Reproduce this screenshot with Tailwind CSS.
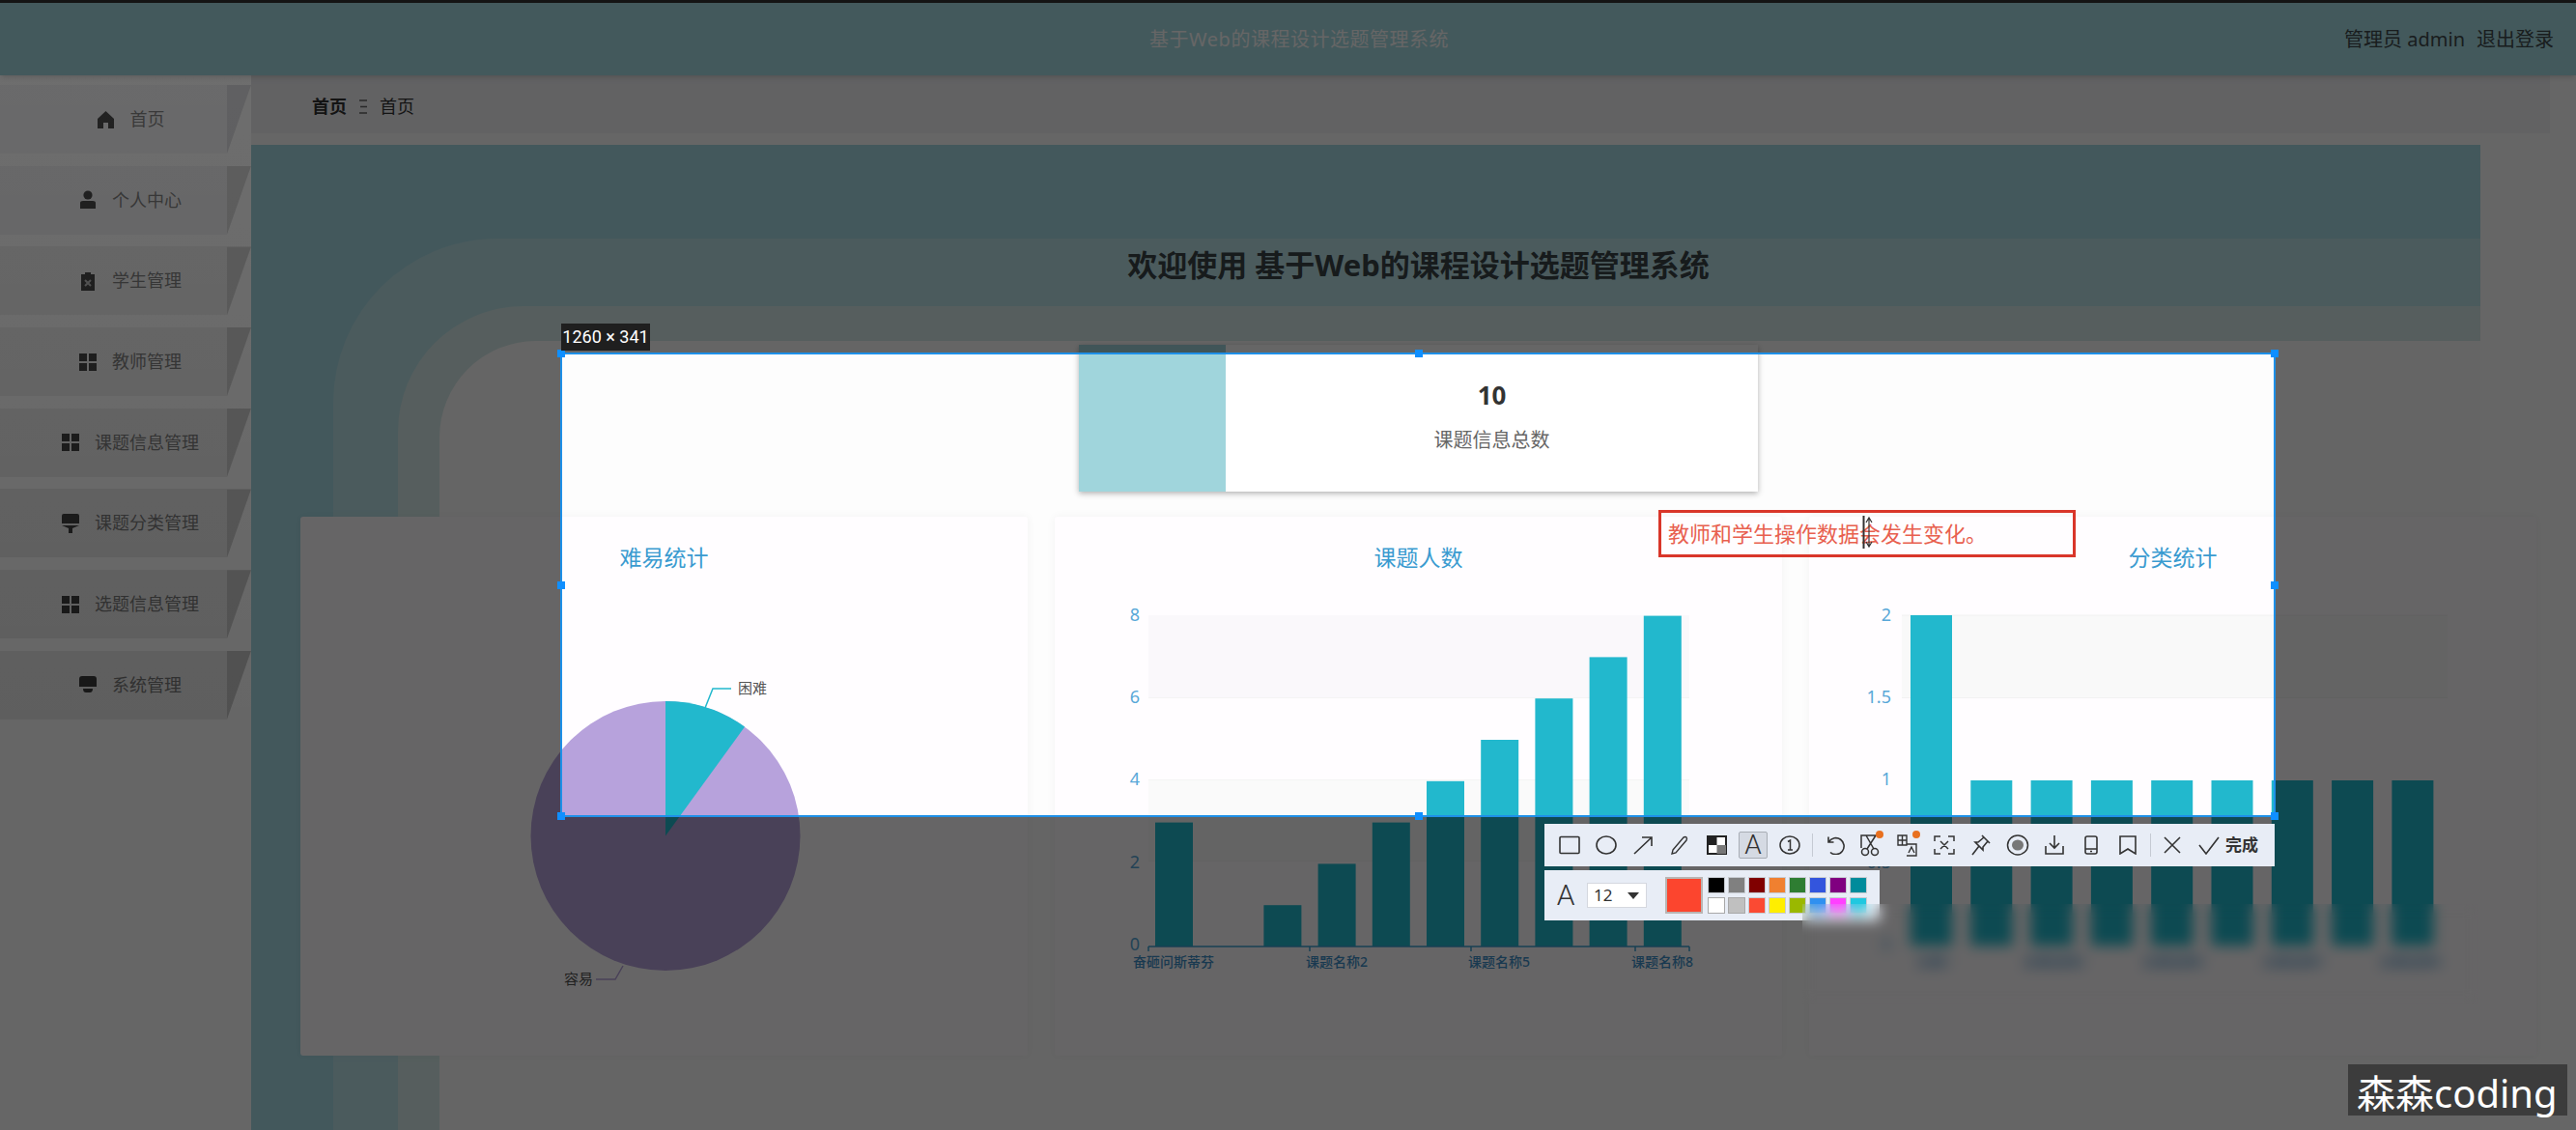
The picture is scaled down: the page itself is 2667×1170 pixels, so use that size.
<!DOCTYPE html>
<html lang="zh">
<head>
    <meta charset="UTF-8">
    <title>基于Web的课程设计选题管理系统</title>
    <script src="https://cdn.jsdelivr.net/npm/@tailwindcss/browser@4"></script>
</head>
<body class="w-[2667px] h-[1170px] overflow-hidden relative bg-white font-['Noto_Sans','Noto_Sans_CJK_SC',sans-serif]">

    <!-- page under the capture overlay -->
    <div class="h-[3px] bg-black/80"></div>
    <header class="relative z-10 h-[75px] bg-[#a8dee6] shadow-md flex items-center">
        <div class="flex-1"></div>
        <div class="ml-[46px] text-[20px] tracking-[0.5px] text-white">基于Web的课程设计选题管理系统</div>
        <div class="flex-1 flex justify-end items-center gap-[12px] pr-[23px] text-[20px] text-[#3f4a4c]">
            <span>管理员 admin</span>
            <span>退出登录</span>
        </div>
    </header>

    <div class="flex h-[1092px]">
        <!-- sidebar -->
        <aside class="w-[260px] shrink-0 pt-[10px] flex flex-col gap-[12.7px] text-[18px] text-[#777]">
            <div class="flex h-[71px]">
                <div class="w-[235px] pl-[35px] flex items-center justify-center gap-[16px] bg-[#f6f6f8]">
                    <svg class="w-[19px] h-[18px] fill-[#3a3a3a]" viewBox="0 0 19 18"><path d="M9.5 0 18 8v10h-6v-6H7v6H1V8z"/></svg>
                    <span>首页</span>
                </div>
                <div class="w-[25px] bg-[#dcdce0] [clip-path:polygon(0_0,100%_0,0_100%)]"></div>
            </div>
            <div class="flex h-[71px]">
                <div class="w-[235px] pl-[35px] flex items-center justify-center gap-[16px] bg-[#f3f3f4]">
                    <svg class="w-[18px] h-[20px] fill-[#3a3a3a]" viewBox="0 0 18 20"><circle cx="9" cy="5" r="4.6"/><path d="M1 13q0-2 3-2h10q3 0 3 2v6H1z"/></svg>
                    <span>个人中心</span>
                </div>
                <div class="w-[25px] bg-[#d6d6d8] [clip-path:polygon(0_0,100%_0,0_100%)]"></div>
            </div>
            <div class="flex h-[71px]">
                <div class="w-[235px] pl-[35px] flex items-center justify-center gap-[16px] bg-[#f1f1f1]">
                    <svg class="w-[18px] h-[20px]" viewBox="0 0 18 20"><path class="fill-[#3a3a3a]" d="M2 3h4V1h6v2h4v17H2z"/><path class="stroke-[#bbb] fill-none" stroke-width="2" d="M6 9l6 6M12 9l-6 6"/></svg>
                    <span>学生管理</span>
                </div>
                <div class="w-[25px] bg-[#d3d3d3] [clip-path:polygon(0_0,100%_0,0_100%)]"></div>
            </div>
            <div class="flex h-[71px]">
                <div class="w-[235px] pl-[35px] flex items-center justify-center gap-[16px] bg-[#efefef]">
                    <svg class="w-[18px] h-[18px] fill-[#3a3a3a]" viewBox="0 0 18 18"><rect width="8" height="8"/><rect x="10" width="8" height="8"/><rect y="10" width="8" height="8"/><rect x="10" y="10" width="8" height="8"/></svg>
                    <span>教师管理</span>
                </div>
                <div class="w-[25px] bg-[#d0d0d0] [clip-path:polygon(0_0,100%_0,0_100%)]"></div>
            </div>
            <div class="flex h-[71px]">
                <div class="w-[235px] pl-[35px] flex items-center justify-center gap-[16px] bg-[#ededed]">
                    <svg class="w-[18px] h-[18px] fill-[#3a3a3a]" viewBox="0 0 18 18"><rect width="8" height="8"/><rect x="10" width="8" height="8"/><rect y="10" width="8" height="8"/><rect x="10" y="10" width="8" height="8"/></svg>
                    <span>课题信息管理</span>
                </div>
                <div class="w-[25px] bg-[#cecece] [clip-path:polygon(0_0,100%_0,0_100%)]"></div>
            </div>
            <div class="flex h-[71px]">
                <div class="w-[235px] pl-[35px] flex items-center justify-center gap-[16px] bg-[#ececec]">
                    <svg class="w-[18px] h-[20px] fill-[#3a3a3a]" viewBox="0 0 18 20"><path d="M2 0h14q2 0 2 2v8H0V2q0-2 2-2z"/><path d="M0 12h18l-7 3v5H7v-5z"/></svg>
                    <span>课题分类管理</span>
                </div>
                <div class="w-[25px] bg-[#cccccc] [clip-path:polygon(0_0,100%_0,0_100%)]"></div>
            </div>
            <div class="flex h-[71px]">
                <div class="w-[235px] pl-[35px] flex items-center justify-center gap-[16px] bg-[#ebebeb]">
                    <svg class="w-[18px] h-[18px] fill-[#3a3a3a]" viewBox="0 0 18 18"><rect width="8" height="8"/><rect x="10" width="8" height="8"/><rect y="10" width="8" height="8"/><rect x="10" y="10" width="8" height="8"/></svg>
                    <span>选题信息管理</span>
                </div>
                <div class="w-[25px] bg-[#cacaca] [clip-path:polygon(0_0,100%_0,0_100%)]"></div>
            </div>
            <div class="flex h-[71px]">
                <div class="w-[235px] pl-[35px] flex items-center justify-center gap-[16px] bg-[#eaeaea]">
                    <svg class="w-[18px] h-[18px] fill-[#3a3a3a]" viewBox="0 0 18 18"><path d="M3 0h12q3 0 3 3v8H0V3q0-3 3-3z"/><path d="M4 13h10q0 4-3 4H7q-3 0-3-4z"/></svg>
                    <span>系统管理</span>
                </div>
                <div class="w-[25px] bg-[#c8c8c8] [clip-path:polygon(0_0,100%_0,0_100%)]"></div>
            </div>
        </aside>

        <!-- main -->
        <main class="flex-1 relative">
            <div class="h-[60px] mr-[27px] bg-[#f4f4f8] flex items-center pl-[63px] pt-[5px] text-[18px] text-[#333]">
                <span class="font-bold">首页</span>
                <svg class="w-[8px] h-[15px] mx-[13px] stroke-[#666]" viewBox="0 0 8 15" stroke-width="1.4"><path d="M0 1h8M1 7.5h7M0 14h8"/></svg>
                <span>首页</span>
            </div>

            <!-- background frame art -->
            <div class="absolute left-0 top-[72px] bottom-0 w-[2308px] pl-[85px] pt-[97px] bg-[#a8dce6] overflow-hidden">
                <div class="h-full pl-[67px] pt-[70px] bg-[#bbe3e9] rounded-tl-[170px]">
                    <div class="h-full pl-[43px] pt-[36px] bg-[#d6ecea] rounded-tl-[130px]">
                        <div class="h-full bg-[#fdfdfd] rounded-tl-[100px]"></div>
                    </div>
                </div>
            </div>

            <div class="relative ml-[51px] w-[2315px] pt-[119px]">
                <h1 class="h-[34px] leading-[34px] text-center text-[31px] font-bold text-[#3a4448]">欢迎使用 基于Web的课程设计选题管理系统</h1>

                <div class="mt-[66px] mx-auto w-[703px] h-[152px] flex bg-white shadow-[0_2px_6px_rgba(0,0,0,0.3)]">
                    <div class="w-[152px] bg-[#a0d5dc]"></div>
                    <div class="flex-1 flex flex-col items-center justify-center pb-[5px]">
                        <div class="h-[36px] leading-[36px] text-[26px] font-bold text-[#333]">10</div>
                        <div class="mt-[15px] text-[20px] leading-[28px] text-[#666]">课题信息总数</div>
                    </div>
                </div>

                <div class="mt-[26px] grid grid-cols-[753px_753px_753px] gap-[28px]">
                    <!-- pie -->
                    <section class="h-[558px] bg-[#fffdff] rounded-[3px] shadow-[0_0_10px_rgba(0,0,0,0.05)]">
                        <h2 class="pt-[26px] h-[58px] leading-[32px] text-center text-[23px] text-[#3a9bd0]">难易统计</h2>
                        <svg class="block" width="753" height="500" viewBox="311 593 753 500">
                            <circle cx="689" cy="865.5" r="139.5" fill="#b7a2dc"/>
                            <path d="M689 865.5V726A139.5 139.5 0 0 1 771 752.6Z" fill="#22b8cd"/>
                            <path d="M730 733 738 713H757" fill="none" stroke="#22b8cd" stroke-width="1.5"/>
                            <text x="764" y="718" font-size="15" fill="#555">困难</text>
                            <path d="M645 1000 637 1014H617" fill="none" stroke="#b7a2dc" stroke-width="1.5"/>
                            <text x="584" y="1019" font-size="15" fill="#555">容易</text>
                        </svg>
                    </section>

                    <!-- topic head count -->
                    <section class="h-[558px] bg-[#fffdff] rounded-[3px] shadow-[0_0_10px_rgba(0,0,0,0.05)]">
                        <h2 class="pt-[26px] h-[58px] leading-[32px] text-center text-[23px] text-[#3a9bd0]">课题人数</h2>
                        <svg class="block" width="753" height="500" viewBox="1092 593 753 500">
                            <rect x="1189" y="637" width="560" height="85" fill="#faf8fb"/>
                            <rect x="1189" y="807" width="560" height="84" fill="#fafafa"/>
                            <path d="M1189 722.5H1749M1189 807.5H1749M1189 891.5H1749" stroke="#f4f4f4"/>
                            <g fill="#22b8cd">
                                <rect x="1196" y="851.6" width="39" height="128.4"/>
                                <rect x="1308.4" y="937.2" width="39" height="42.8"/>
                                <rect x="1364.6" y="894.4" width="39" height="85.6"/>
                                <rect x="1420.8" y="851.6" width="39" height="128.4"/>
                                <rect x="1477" y="808.8" width="39" height="171.2"/>
                                <rect x="1533.2" y="766" width="39" height="214"/>
                                <rect x="1589.4" y="723.2" width="39" height="256.8"/>
                                <rect x="1645.6" y="680.4" width="39" height="299.6"/>
                                <rect x="1701.8" y="637.6" width="39" height="342.4"/>
                            </g>
                            <path d="M1189 980H1749M1189 980V985M1356 980V985M1523 980V985M1693 980V985M1749 980V985" fill="none" stroke="#3d9fd0" stroke-width="1.5"/>
                            <g font-size="18" fill="#58a8d8" text-anchor="end">
                                <text x="1180" y="643">8</text>
                                <text x="1180" y="728">6</text>
                                <text x="1180" y="813">4</text>
                                <text x="1180" y="899">2</text>
                                <text x="1180" y="984">0</text>
                            </g>
                            <g font-size="14" font-weight="500" fill="#3f90c8" text-anchor="middle">
                                <text x="1215" y="1001">奋砸问斯蒂芬</text>
                                <text x="1384" y="1001">课题名称2</text>
                                <text x="1552" y="1001">课题名称5</text>
                                <text x="1721" y="1001">课题名称8</text>
                            </g>
                        </svg>
                    </section>

                    <!-- category count -->
                    <section class="h-[558px] bg-[#fffdff] rounded-[3px] shadow-[0_0_10px_rgba(0,0,0,0.05)]">
                        <h2 class="pt-[26px] h-[58px] leading-[32px] text-center text-[23px] text-[#3a9bd0]">分类统计</h2>
                        <svg class="block" width="753" height="500" viewBox="1873 593 753 500">
                            <rect x="1969" y="637" width="565" height="85" fill="#f9f9f9"/>
                            <path d="M1969 637H2534M1969 722.5H2534" stroke="#f2f2f2"/>
                            <g fill="#22b8cd">
                                <rect x="1978" y="637" width="43" height="342"/>
                                <rect x="2040.3" y="808" width="43" height="171"/>
                                <rect x="2102.6" y="808" width="43" height="171"/>
                                <rect x="2164.9" y="808" width="43" height="171"/>
                                <rect x="2227.2" y="808" width="43" height="171"/>
                                <rect x="2289.5" y="808" width="43" height="171"/>
                                <rect x="2351.8" y="808" width="43" height="171"/>
                                <rect x="2414.1" y="808" width="43" height="171"/>
                                <rect x="2476.4" y="808" width="43" height="171"/>
                            </g>
                            <g font-size="18" fill="#58a8d8" text-anchor="end">
                                <text x="1958" y="643">2</text>
                                <text x="1958" y="728">1.5</text>
                                <text x="1958" y="813">1</text>
                                <text x="1958" y="899">0.5</text>
                                <text x="1958" y="984">0</text>
                            </g>
                            <g font-size="14" font-weight="500" fill="#3f90c8" text-anchor="middle">
                                <text x="2002" y="1001">分类1</text>
                                <text x="2126" y="1001">分类名称3</text>
                                <text x="2250" y="1001">分类名称5</text>
                                <text x="2374" y="1001">分类名称7</text>
                                <text x="2495" y="1001">分类名称9</text>
                            </g>
                        </svg>
                    </section>
                </div>
            </div>
        </main>
    </div>

    <!-- capture selection with the dim mask around it -->
    <div class="absolute z-20 left-[580px] top-[365px] w-[1776px] h-[481px] border-2 border-[#1e90e8] shadow-[0_0_0_3000px_rgba(0,0,0,0.6)]">
        <div class="absolute -left-[5px] -top-[5px] w-[8px] h-[8px] bg-[#0f8fff]"></div>
        <div class="absolute left-[883px] -top-[5px] w-[8px] h-[8px] bg-[#0f8fff]"></div>
        <div class="absolute -right-[5px] -top-[5px] w-[8px] h-[8px] bg-[#0f8fff]"></div>
        <div class="absolute -left-[5px] top-[235px] w-[8px] h-[8px] bg-[#0f8fff]"></div>
        <div class="absolute -right-[5px] top-[235px] w-[8px] h-[8px] bg-[#0f8fff]"></div>
        <div class="absolute -left-[5px] -bottom-[5px] w-[8px] h-[8px] bg-[#0f8fff]"></div>
        <div class="absolute left-[883px] -bottom-[5px] w-[8px] h-[8px] bg-[#0f8fff]"></div>
        <div class="absolute -right-[5px] -bottom-[5px] w-[8px] h-[8px] bg-[#0f8fff]"></div>
    </div>

    <!-- sidebar reads a little lighter near the top in the recording -->
    <div class="absolute z-20 left-0 top-[78px] w-[260px] h-[700px] bg-linear-to-b from-white/5 to-transparent"></div>

    <div class="absolute z-30 left-[581px] top-[335px] w-[92px] h-[28px] bg-[#1f1f1f] text-white text-[18px] leading-[28px] text-center font-['Roboto',sans-serif] whitespace-nowrap">1260 × 341</div>

    <!-- text annotation -->
    <div class="absolute z-30 left-[1717px] top-[528px] w-[432px] h-[49px] border-[3px] border-[#d9362a] pl-[7px] text-[22px] leading-[43px] text-[#e8604f] whitespace-nowrap">教师和学生操作数据会发生变化。</div>
    <svg class="absolute z-30 left-[1925px] top-[533px]" width="16" height="38" viewBox="0 0 16 38" fill="none" stroke="#333">
        <path d="M4.5 1V35" stroke-width="2"/>
        <path d="M10 4V32M7 8l3-5 3 5M7 28l3 5 3-5" stroke-width="1.2"/>
    </svg>

    <!-- capture toolbar -->
    <div class="absolute z-30 left-[1599px] top-[853px] w-[756px] h-[44px] bg-[#e8edf6] flex items-center pl-[7px] text-[#333]">
        <svg class="w-[38px] h-[20px]" viewBox="0 0 38 20" fill="none" stroke="#333" stroke-width="1.6"><rect x="9" y="1.5" width="20" height="17" rx="1"/></svg>
        <svg class="w-[38px] h-[20px]" viewBox="0 0 38 20" fill="none" stroke="#333" stroke-width="1.6"><ellipse cx="19" cy="10" rx="10" ry="9"/></svg>
        <svg class="w-[38px] h-[20px]" viewBox="0 0 38 20" fill="none" stroke="#333" stroke-width="1.6"><path d="M10 19 28 2M18 2H28V11"/></svg>
        <svg class="w-[38px] h-[20px]" viewBox="0 0 38 20" fill="none" stroke="#333" stroke-width="1.4"><path d="M12 15 23 2q2-1 3 0t0 3L15 18l-4 1z"/></svg>
        <svg class="w-[38px] h-[20px]" viewBox="0 0 38 20"><rect x="10" y="1" width="19" height="18" fill="#fff" stroke="#222" stroke-width="2"/><rect x="10" y="1" width="9.5" height="9" fill="#222"/><rect x="19.5" y="10" width="9.5" height="9" fill="#777"/></svg>
        <div class="w-[38px] flex justify-center">
            <div class="w-[30px] h-[28px] flex items-center justify-center bg-[#d5dae3] border border-[#a8adb5] rounded-[2px] text-[28px] leading-none font-['Roboto',sans-serif] font-light">A</div>
        </div>
        <svg class="w-[38px] h-[20px]" viewBox="0 0 38 20" fill="none" stroke="#333" stroke-width="1.5"><ellipse cx="19" cy="10" rx="10" ry="9"/><path d="M17 6.5 19.5 5V15M17 15H22"/></svg>
        <div class="w-px h-[24px] mx-[3.5px] bg-[#c5cad3]"></div>
        <svg class="w-[38px] h-[20px]" viewBox="0 0 38 20" fill="none" stroke="#333" stroke-width="1.6"><path d="M13 1.5V7H18.500M13.500 6.500A8.500 8.500 0 1 1 15 17.500"/></svg>
        <svg class="w-[38px] h-[24px] overflow-visible" viewBox="0 0 38 24" fill="none" stroke="#333" stroke-width="1.5"><path d="M9 15V2H27M14 2 22 16M24 2 15 16"/><circle cx="13" cy="19" r="3.500"/><circle cx="23" cy="19" r="3.500"/><circle cx="28" cy="1" r="4" fill="#e8701f" stroke="none"/></svg>
        <svg class="w-[38px] h-[24px] overflow-visible" viewBox="0 0 38 24" fill="none" stroke="#333" stroke-width="1.4"><path d="M9 2H18V12H9zM9 7H18M13.500 2V12M18 11H28V23H18"/><path d="M20 20 23 14 26 20" /><circle cx="28" cy="1" r="4" fill="#e8701f" stroke="none"/></svg>
        <svg class="w-[38px] h-[20px]" viewBox="0 0 38 20" fill="none" stroke="#333" stroke-width="1.5"><path d="M9 6V1H15M23 1H29V6M29 14V19H23M15 19H9V14M15 6 23 14M23 6 15 14"/></svg>
        <svg class="w-[38px] h-[22px]" viewBox="0 0 38 22" fill="none" stroke="#333" stroke-width="1.6"><path d="M20 1 28 9M22 3 16 8 13 8 21 16 21 13 26 7M17 12 10 21"/></svg>
        <svg class="w-[38px] h-[22px]" viewBox="0 0 38 22"><ellipse cx="19" cy="11" rx="10.500" ry="10" fill="none" stroke="#333" stroke-width="1.500"/><ellipse cx="19" cy="11" rx="6" ry="5.500" fill="#777"/></svg>
        <svg class="w-[38px] h-[20px]" viewBox="0 0 38 20" fill="none" stroke="#333" stroke-width="1.6"><path d="M19 0V12M14 8 19 13 24 8M10 11V19H28V11"/></svg>
        <svg class="w-[38px] h-[20px]" viewBox="0 0 38 20" fill="none" stroke="#333" stroke-width="1.6"><rect x="13" y="1" width="12" height="18" rx="2"/><path d="M13 14H25M18 16.500H20"/></svg>
        <svg class="w-[38px] h-[20px]" viewBox="0 0 38 20" fill="none" stroke="#333" stroke-width="1.6"><path d="M11 1H27V19L19 14 11 19Z"/></svg>
        <div class="w-px h-[24px] mx-[3.5px] bg-[#c5cad3]"></div>
        <svg class="w-[38px] h-[20px]" viewBox="0 0 38 20" fill="none" stroke="#333" stroke-width="1.6"><path d="M11 2 27 18M27 2 11 18"/></svg>
        <svg class="w-[38px] h-[20px]" viewBox="0 0 38 20" fill="none" stroke="#333" stroke-width="1.6"><path d="M9 10 16 19 29 2"/></svg>
        <span class="-ml-[2px] text-[17px] font-bold text-[#333] whitespace-nowrap">完成</span>
    </div>

    <div class="absolute z-30 left-[1599px] top-[901px] w-[347px] h-[52px] bg-[#e8edf6] flex items-center">
        <span class="ml-[10px] w-[24px] text-center text-[30px] leading-none text-[#333] font-['Roboto',sans-serif] font-light">A</span>
        <div class="ml-[10px] w-[62px] h-[26px] bg-white border border-[#d5d8df] flex items-center justify-between pl-[6px] pr-[7px]">
            <span class="text-[17px] text-[#333]">12</span>
            <span class="w-0 h-0 border-x-[6px] border-x-transparent border-t-[7px] border-t-[#333]"></span>
        </div>
        <div class="ml-[19px] w-[39px] h-[38px] bg-[#fc452e] border-2 border-[#b9b5b3]"></div>
        <div class="ml-[5px] grid grid-cols-[repeat(8,18px)] grid-rows-[17px_17px] gap-x-[3px] gap-y-[4px]">
            <div class="bg-[#000000] border border-[#c8ccd2]"></div>
            <div class="bg-[#808080] border border-[#c8ccd2]"></div>
            <div class="bg-[#800000] border border-[#c8ccd2]"></div>
            <div class="bg-[#f08030] border border-[#c8ccd2]"></div>
            <div class="bg-[#2e7d32] border border-[#c8ccd2]"></div>
            <div class="bg-[#3355dd] border border-[#c8ccd2]"></div>
            <div class="bg-[#800080] border border-[#c8ccd2]"></div>
            <div class="bg-[#008b9b] border border-[#c8ccd2]"></div>
            <div class="bg-[#ffffff] border border-[#a8a8a8]"></div>
            <div class="bg-[#c0c0c0] border border-[#a8a8a8]"></div>
            <div class="bg-[#fb4a33] border border-[#c8ccd2]"></div>
            <div class="bg-[#ffee00] border border-[#c8ccd2]"></div>
            <div class="bg-[#9ab800] border border-[#c8ccd2]"></div>
            <div class="bg-[#3090f0] border border-[#c8ccd2]"></div>
            <div class="bg-[#ff40ff] border border-[#c8ccd2]"></div>
            <div class="bg-[#20c8e0] border border-[#c8ccd2]"></div>
        </div>
    </div>

    <!-- video compression smear -->
    <div class="absolute z-40 left-[1866px] top-[936px] w-[700px] h-[104px] backdrop-blur-[7px]"></div>

    <!-- watermark -->
    <div class="absolute z-50 left-[2431px] top-[1102px] w-[227px] h-[53px] bg-[#3c3c3c] pl-[9px] text-[40px] leading-[60px] text-white whitespace-nowrap">森森coding</div>
</body>
</html>
